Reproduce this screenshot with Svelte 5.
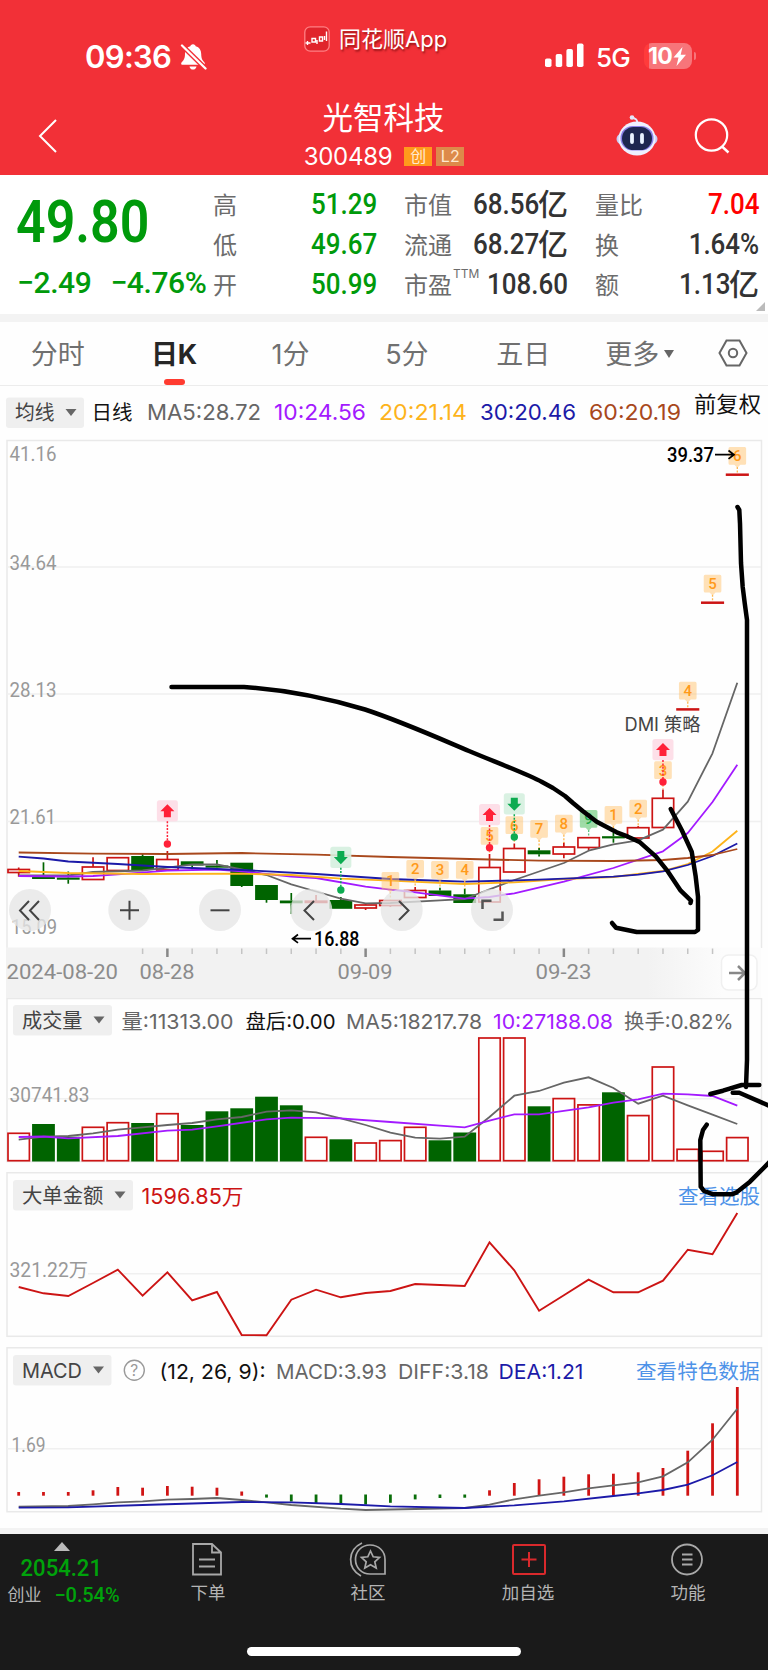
<script lang="ts">
  const STEP = 24.78
  const cx = (i: number) => 18.7 + i * STEP

  const quotes = [
    [{ k: '高', v: '51.29', c: 'down' }, { k: '市值', v: '68.56', u: '亿' }, { k: '量比', v: '7.04', c: 'hot' }],
    [{ k: '低', v: '49.67', c: 'down' }, { k: '流通', v: '68.27', u: '亿' }, { k: '换', v: '1.64%' }],
    [{ k: '开', v: '50.99', c: 'down' }, { k: '市盈', sup: 'TTM', v: '108.60' }, { k: '额', v: '1.13', u: '亿' }],
  ]

  const tabs = ['分时', '日K', '1分', '5分', '五日', '更多']
  let active = $state('日K')

  // [up, bodyTop, bodyBottom, high, low]
  const candles: [boolean, number, number, number, number][] = [
    [true, 869.5, 872.5, 867.5, 876.7],
    [false, 876.7, 879, 862.3, 879],
    [false, 877.5, 879.7, 871.5, 883.7],
    [true, 867, 879.5, 857.3, 879.5],
    [true, 857.7, 870.5, 857.7, 870.5],
    [false, 856, 870, 854, 870],
    [true, 859.5, 870, 851, 870],
    [false, 861.3, 865.5, 861.3, 869.5],
    [false, 865.5, 867.7, 860, 869],
    [false, 862.7, 886, 862.7, 887],
    [false, 885, 900, 885, 902.7],
    [false, 900.5, 903.3, 893, 914],
    [true, 901.2, 902.4, 895, 902],
    [false, 900, 908.8, 897, 908.8],
    [true, 905, 908, 903.5, 910],
    [true, 900.5, 905.5, 900.5, 907],
    [true, 890.5, 897.5, 887, 897.5],
    [false, 890.5, 896, 887.7, 896],
    [false, 894.3, 903, 888.5, 903],
    [true, 867.5, 902, 854, 902],
    [true, 848.5, 872, 843.5, 872],
    [false, 850.3, 854.3, 848, 856.5],
    [true, 847, 854, 842.5, 858.3],
    [true, 837.7, 847.5, 837.7, 850.5],
    [false, 836.2, 838.4, 832.7, 842.7],
    [true, 827.7, 838, 826, 838],
    [true, 798.3, 827.5, 789.5, 827.5],
    [true, 709, 709.8, 709, 709.8],
    [true, 602.3, 603.1, 602.3, 603.1],
    [true, 474.3, 475.1, 474.3, 475.1],
  ]

  type Series = [number, number][]
  const pts = (s: Series) => s.map(([i, y]) => `${cx(i).toFixed(1)},${y}`).join(' ')

  const mas: { color: string; data: Series }[] = [
    { color: '#666', data: [[0, 875.5], [2, 875.5], [3, 872], [5, 870.5], [6, 867.7], [7, 864.3], [8, 864.5], [9, 869.5], [10, 875], [11, 884.3], [12, 891.5], [13, 898.7], [14, 903.3], [15, 903], [17, 900.3], [18, 899], [19, 889.3], [20, 880], [22, 863], [23, 850.7], [24, 844.3], [25, 840.3], [26, 829.7], [27, 801.7], [28, 753.3], [29, 682.7]] },
    { color: '#a31aff', data: [[0, 876], [2, 876.5], [3, 876], [4, 874.3], [6, 870.7], [8, 869.5], [9, 871.3], [11, 876.5], [12, 878], [14, 886.7], [15, 889.7], [16, 892.3], [18, 898.7], [19, 897], [20, 893.3], [22, 881.7], [24, 868], [26, 851.3], [27, 833], [28, 802], [29, 764.7]] },
    { color: '#fdb31b', data: [[0, 871], [2, 873], [5, 874], [9, 873.7], [11, 875], [13, 878.7], [15, 880.7], [18, 884], [20, 882.3], [22, 879], [24, 877], [26, 871], [27, 864], [28, 851.5], [29, 830.7]] },
    { color: '#1c1aa8', data: [[0, 856.7], [1, 858.5], [2, 861.5], [4, 864], [6, 867], [9, 870], [12, 874], [15, 879], [18, 881.7], [21, 879.7], [24, 876.7], [25, 874.7], [26, 871.3], [27, 865], [28, 856], [29, 843.5]] },
    { color: '#a8481c', data: [[0, 852.5], [3, 853.7], [6, 854], [9, 853], [12, 854.7], [15, 857], [19, 859.5], [21, 860.7], [24, 861], [26, 860], [27, 858], [28, 855], [29, 849]] },
  ]

  // [index, top, digit, dotted line end]
  const tags: [number, number, string, number][] = [
    [15, 872, '1', 900], [16, 860, '2', 887], [17, 861, '3', 888], [18, 861, '4', 889],
    [19, 827, '5', 854], [20, 816.3, '6', 843], [21, 820, '7', 848], [22, 814.7, '8', 843],
    [23, 810, '9', 837], [24, 806, '1', 833], [25, 799.7, '2', 827], [26, 761.3, '3', 789],
    [27, 681.7, '4', 708], [28, 574.7, '5', 601], [29, 447, '6', 473],
  ]

  // [index, box top, dot centre, buy]
  const signals: [number, number, number, boolean][] = [
    [6, 800.3, 844, true], [13, 846.7, 890, false], [19, 804, 847.7, true], [20, 793.3, 837, false], [26, 739, 782, true],
  ]

  const volumes: [boolean, number][] = [
    [true, 1133.3], [false, 1124], [false, 1136.7], [true, 1127.3], [true, 1122.7], [false, 1123],
    [true, 1113.7], [false, 1125], [false, 1111.3], [false, 1108.3], [false, 1096.7], [false, 1105.3],
    [true, 1137.3], [false, 1139.3], [true, 1143], [true, 1140.6], [true, 1127.3], [false, 1140.3],
    [false, 1132.5], [true, 1038], [true, 1038], [false, 1106.3], [true, 1098.6], [true, 1104.9],
    [false, 1092.3], [true, 1115.6], [true, 1067], [true, 1149.3], [true, 1151.3], [true, 1137.6],
  ]
  const vol5: Series = [[0, 1139.7], [1, 1136.7], [2, 1136], [3, 1133.3], [4, 1129.7], [5, 1127.3], [6, 1125], [7, 1123], [8, 1119.3], [9, 1117], [10, 1111.7], [11, 1110.3], [12, 1112.3], [13, 1118.3], [14, 1125], [15, 1132.7], [16, 1137.7], [17, 1138.7], [18, 1136.7], [19, 1117], [20, 1095.7], [21, 1091], [22, 1082.7], [23, 1077.3], [24, 1088], [25, 1103.7], [26, 1095.7], [27, 1105.3], [28, 1114.7], [29, 1124]]
  const vol10: Series = [[0, 1137], [1, 1136.5], [2, 1138.3], [4, 1136], [6, 1130.7], [7, 1129.7], [8, 1126.3], [10, 1119.3], [11, 1117.7], [13, 1118.3], [15, 1122], [17, 1125.7], [18, 1127.3], [19, 1120.7], [20, 1114.3], [21, 1114.3], [23, 1107.3], [24, 1102.7], [25, 1099.3], [26, 1093.7], [27, 1094.3], [28, 1096], [29, 1105.7]]

  const bigOrders = [1287, 1293.3, 1296, 1283, 1269.7, 1295.7, 1272.3, 1300.3, 1292, 1335, 1335.3, 1299.7, 1289.7, 1297.3, 1293, 1291, 1284, 1285, 1286, 1242.3, 1270.3, 1310.7, 1295.3, 1279.7, 1292.3, 1292.3, 1280.7, 1249.7, 1254.3, 1213]

  const macd = [1492, 1492, 1492, 1490.3, 1487, 1487.7, 1486, 1486.7, 1487.7, 1491.5, 1497.6, 1501.5, 1503.5, 1504.5, 1504.5, 1502.8, 1499.4, 1498, 1497.7, 1490.3, 1483, 1479.3, 1476.7, 1474.3, 1473.7, 1472.3, 1468, 1450.7, 1423.3, 1387]
  const diff: Series = [[0, 1506.7], [2, 1506], [3, 1504.3], [4, 1502.3], [5, 1501.3], [6, 1499.7], [7, 1499], [8, 1498], [9, 1500], [10, 1502.3], [11, 1505], [13, 1508.7], [14, 1510], [16, 1509], [18, 1508], [19, 1504.7], [20, 1499.3], [21, 1495.7], [22, 1492.3], [23, 1488.3], [24, 1485.3], [25, 1482.3], [26, 1476.3], [27, 1462.3], [28, 1439.7], [29, 1408.7]]
  const dea: Series = [[0, 1507.7], [2, 1507.3], [5, 1505], [9, 1502], [11, 1502.3], [13, 1504], [15, 1506.3], [18, 1508], [20, 1505.3], [22, 1501.3], [24, 1496], [25, 1493.3], [26, 1490], [27, 1484.7], [28, 1475.3], [29, 1462]]
</script>

{#snippet txt(x: number, y: number, w: number, s: string, color: string, size: number, cls: string)}
  <text {x} {y} textLength={w} lengthAdjust="spacingAndGlyphs" fill={color} font-size={size} class={cls}>{s}</text>
{/snippet}

{#snippet chip(y: number, w: number, s: string, x: number = 13)}
  <rect {x} {y} width={w} height="30.5" rx="3" fill="#efefef" />
  {@render txt(x + 9, y + 22.7, w - 38.5, s, '#444', 20.5, 'ui')}
  <path d="M{x + w - 18.5} {y + 11.5}h11l-5.5 7z" fill="#666" />
{/snippet}

<div class="screen">
  <header>
    <div class="status">
      <div class="clock">
        <span>09:36</span>
        <svg width="27" height="28" viewBox="0 0 27 28">
          <path d="M13 1.2c1.6 0 2.4 1 2.7 2 3.8 1 5.4 4 5.5 7.8 0.1 5 1.5 6.6 3.3 8.4 0.7 1 0.3 2.4-1 2.4h-21c-1.3 0-1.7-1.4-1-2.4C3.5 17.5 4.9 16 5 11c0.1-3.8 1.7-6.8 5.3-7.8 0.3-1 1.1-2 2.7-2zM9.5 23.4h7c-0.3 2-1.7 3.2-3.5 3.2s-3.2-1.2-3.5-3.2z" fill="#fff" />
          <path d="M2 2.5l23.5 23" stroke="#f23037" stroke-width="5" />
          <path d="M2 2.5l23.5 23" stroke="#fff" stroke-width="2.3" stroke-linecap="round" />
        </svg>
      </div>
      <div class="app">
        <svg width="26" height="26" viewBox="0 0 26 26">
          <rect x=".8" y=".8" width="24.4" height="24.4" rx="5.5" fill="#e0242c" stroke="#ff8084" stroke-width="1.3" />
          <path d="M1.5 17h5M3.5 15v4M8 12.5h3.5v3.5H8zM13 14v4M15.5 11h3v4h-3zM20.5 10v4M22.5 5.5V15" stroke="#fff" stroke-width="1.4" fill="none" />
        </svg>
        <span>同花顺App</span>
      </div>
      <div class="net">
        <svg width="39" height="25" viewBox="0 0 39 25" fill="#fff">
          <rect x="0" y="15.5" width="6.5" height="8.5" rx="1.8" />
          <rect x="10.7" y="11" width="6.5" height="13" rx="1.8" />
          <rect x="21.4" y="6" width="6.5" height="18" rx="1.8" />
          <rect x="32" y=".5" width="6.5" height="23.5" rx="1.8" />
        </svg>
        <span class="g5">5G</span>
        <div class="battery">
          <span>10</span>
          <svg width="14" height="19" viewBox="0 0 14 19"><path d="M9.5 0L.5 10.5h5L3.5 19 13 7.8H7.7z" fill="#fff" /></svg>
        </div>
      </div>
    </div>
    <div class="title-bar">
      <svg class="back" width="20" height="36" viewBox="0 0 20 36"><path d="M18 2L2 18l16 16" fill="none" stroke="#fff" stroke-width="2" /></svg>
      <div class="stock">
        <h1>光智科技</h1>
        <div class="code">
          <span>300489</span><i class="cy">创</i><i class="l2">L2</i>
        </div>
      </div>
      <div class="tools">
        <svg width="42" height="41" viewBox="0 0 42 41">
          <path d="M21 8C22 4 19 4 16.5 2.5" stroke="#e4e6fb" stroke-width="2" fill="none" />
          <circle cx="16" cy="2.5" r="2.3" fill="#e4e6fb" />
          <ellipse cx="21" cy="24" rx="20.5" ry="9.5" fill="#c9cdf4" />
          <ellipse cx="21" cy="23.5" rx="18.5" ry="17" fill="#eef0ff" />
          <rect x="4.5" y="11" width="33" height="24.5" rx="12" fill="#8a82e8" />
          <rect x="6" y="12" width="30" height="23" rx="11.5" fill="#1d2750" />
          <path d="M16 20v7M26 20v7" stroke="#e9f3ff" stroke-width="3.8" stroke-linecap="round" />
        </svg>
        <svg class="find" width="36" height="38" viewBox="0 0 36 38"><circle cx="17.5" cy="18" r="15.7" fill="none" stroke="#fff" stroke-width="2.2" /><path d="M28 29.5l6.5 6" stroke="#fff" stroke-width="2.4" /></svg>
      </div>
    </div>
  </header>

  <section class="quote">
    <div class="price down">
      <div class="now"><span class="num">49.80</span></div>
      <div class="chg"><span>−2.49</span><span>−4.76%</span></div>
    </div>
    <div class="grid">
      {#each quotes as row}
        {#each row as q}
          <div class="cell">
            <span class="k">{q.k}{#if q.sup}<sup>{q.sup}</sup>{/if}</span>
            <span class="v {q.c ?? ''}"><span class="num">{q.v}</span>{#if q.u}<b>{q.u}</b>{/if}</span>
          </div>
        {/each}
      {/each}
    </div>
    <i class="corner"></i>
  </section>

  <nav class="tabs">
    {#each tabs as tab}
      <button class:active={active === tab} onclick={() => active = tab}>
        {tab}{#if tab === '更多'}<i class="caret"></i>{/if}
      </button>
    {/each}
    <div class="setting">
      <svg width="30" height="28" viewBox="0 0 30 28" fill="none" stroke="#666" stroke-width="2"><path d="M8.5 1.5h13L28.5 14l-7 12.5h-13L1.5 14z" /><circle cx="15" cy="14" r="4.2" /></svg>
    </div>
  </nav>

  <!-- Candlestick chart -->
  <svg class="pane" width="768" height="612" viewBox="0 386 768 612">
    {@render chip(397.5, 78, '均线', 6)}
    {@render txt(91.5, 419.5, 41, '日线', '#111', 20.5, 'ui')}
    {@render txt(147, 420, 114, 'MA5:28.72', '#666', 22, 'ui')}
    {@render txt(274, 420, 92, '10:24.56', '#a31aff', 22, 'ui')}
    {@render txt(379, 420, 88, '20:21.14', '#fdb31b', 22, 'ui')}
    {@render txt(480, 420, 96, '30:20.46', '#1c1aa8', 22, 'ui')}
    {@render txt(589, 420, 92, '60:20.19', '#a8481c', 22, 'ui')}
    {@render txt(694, 411.5, 67, '前复权', '#111', 21.5, 'ui')}

    <path d="M7 948V440.5H761.5V948" fill="none" stroke="#e9e9e9" stroke-width="1.5" />
    <path d="M7 567H761M7 694H761M7 821.5H761" stroke="#f0f0f0" stroke-width="1.5" />

    <defs>
      <linearGradient id="axis-bg" x1="0" y1="0" x2="1" y2="0">
        <stop offset="0" stop-color="#f2f2f2" />
        <stop offset=".85" stop-color="#f2f2f2" />
        <stop offset=".95" stop-color="#fcfcfc" />
      </linearGradient>
    </defs>
    <rect x="6" y="947.5" width="755" height="50.5" fill="url(#axis-bg)" />
    {#each Array(24) as _, n}
      {@const i = n + 5}
      {@const major = i % 8 === 6}
      <path d="M{cx(i)} 948.5v{major ? 8.5 : 5.5}" stroke={major ? '#888' : '#c4c4c4'} stroke-width={major ? 2.5 : 1.5} />
    {/each}
    {@render txt(6.5, 979.3, 111.5, '2024-08-20', '#8c8c8c', 19.5, 'din')}
    {@render txt(139.5, 979.3, 55, '08-28', '#8c8c8c', 19.5, 'din')}
    {@render txt(337.5, 979.3, 55, '09-09', '#8c8c8c', 19.5, 'din')}
    {@render txt(535.5, 979.3, 56, '09-23', '#8c8c8c', 19.5, 'din')}

    {@render txt(9.5, 460.5, 47, '41.16', '#999', 19.5, 'din')}
    {@render txt(9.5, 569.5, 47, '34.64', '#999', 19.5, 'din')}
    {@render txt(9.5, 696.5, 47, '28.13', '#999', 19.5, 'din')}
    {@render txt(9.5, 823.8, 46.5, '21.61', '#999', 19.5, 'din')}
    {@render txt(11, 934, 46, '15.09', '#999', 19.5, 'din')}

    {#each candles as [up, t, b, hi, lo], i}
      {@const c = up ? '#cc1414' : '#006400'}
      <g stroke={c} stroke-width="1.7">
        {#if hi < t}<path d="M{cx(i)} {hi}V{t}" />{/if}
        {#if lo > b}<path d="M{cx(i)} {b}V{lo}" />{/if}
        {#if up}
          <rect x={cx(i) - 10.7} y={t} width="21.4" height={b - t} fill="#fff" />
        {:else}
          <rect x={cx(i) - 11.4} y={t} width="22.8" height={b - t} fill={c} stroke="none" />
        {/if}
      </g>
    {/each}

    {#each mas as m}
      <polyline points={pts(m.data)} fill="none" stroke={m.color} stroke-width="1.8" stroke-linejoin="round" />
    {/each}

    <!-- Streak counters -->
    {#each tags as [i, top, n, end]}
      {@const green = n === '9'}
      <path d="M{cx(i)} {top + 20}V{end}" stroke={green ? '#5cc080' : '#ffb84d'} stroke-width="1.3" stroke-dasharray="2 1.5" />
      <path
        d="M{cx(i) - 7.3} {top}h14.6q1.5 0 1.5 1.5v14.7q0 1.5-1.5 1.5h-4.3l-3 3-3-3h-4.3q-1.5 0-1.5-1.5v-14.7q0-1.5 1.5-1.5z"
        fill={green ? '#7fd08a' : '#ffc470'}
        fill-opacity={green ? .75 : .5}
      />
      <text x={cx(i)} y={top + 14.3} text-anchor="middle" font-size="15" fill={green ? '#1fa84a' : '#ff9a1a'} class="din mid">{n}</text>
    {/each}

    <!-- Buy / sell signals -->
    {#each signals as [i, top, dot, buy]}
      {@const c = buy ? '#ff2138' : '#0cab50'}
      <rect x={cx(i) - 10.5} y={top} width="21" height="21.3" rx="2.5" fill={buy ? '#fddbe6' : '#d5f0df'} opacity=".9" />
      <path transform="translate({cx(i)} {top + 10.7}){buy ? '' : ' scale(1 -1)'}" d="M0-6.8L7 .3H3.5V6.3H-3.5V.3H-7z" fill={c} />
      <path d="M{cx(i)} {top + 21}V{dot}" stroke={c} stroke-width="1.5" stroke-dasharray="2 1.4" />
      <circle cx={cx(i)} cy={dot} r="3.7" fill={c} />
    {/each}
    {@render txt(624.5, 731, 76, 'DMI 策略', '#444', 18.5, 'ui')}

    {@render txt(667, 462, 47, '39.37', '#000', 19.5, 'din mid')}
    <path d="M715 454.7h19M728.5 450.5l5.5 4.2-5.5 4.2" fill="none" stroke="#000" stroke-width="1.7" />
    {@render txt(314, 946, 45.5, '16.88', '#000', 19.5, 'din mid')}
    <path d="M311 938.7H292M298 934.5l-5.5 4.2 5.5 4.2" fill="none" stroke="#000" stroke-width="1.7" />

    <!-- Round controls -->
    <g fill="#e6e6e6" fill-opacity=".78">
      {#each [30, 129.3, 220, 311.3, 401.7, 492] as x}
        <circle cx={x} cy="910" r="21" />
      {/each}
    </g>
    <g fill="none" stroke="#444" stroke-width="2">
      <path d="M29 901l-9 9.5 9 9.5M39 901l-9 9.5 9 9.5" />
      <path d="M120 910.3h19M129.5 900.8v19" />
      <path d="M210.5 910.3h19" />
      <path d="M314 901l-9.5 9.5 9.5 9.5" />
      <path d="M399 901l9.5 9.5-9.5 9.5" />
    </g>
    <path d="M482.5 909v-8.3h9M493.5 919.7h9v-8.3" fill="none" stroke="#555" stroke-width="2.5" />

    <rect x="721.5" y="955" width="35.5" height="35" rx="7" fill="#fff" stroke="#f0f0f0" stroke-width="1.5" />
    <path d="M729 973h15M738 966l7 7-7 7" fill="none" stroke="#888" stroke-width="2.5" />
  </svg>

  <!-- Volume -->
  <svg class="pane" width="768" height="174" viewBox="0 998 768 174">
    <path d="M7 1161.5V998.5H761.5V1161.5z" fill="none" stroke="#e9e9e9" stroke-width="1.5" />
    <path d="M7 1098.7H761" stroke="#f0f0f0" stroke-width="1.5" />
    {@render chip(1005, 99, '成交量')}
    {@render txt(121.5, 1028.5, 112, '量:11313.00', '#666', 20.5, 'ui')}
    {@render txt(245.5, 1028.5, 90, '盘后:0.00', '#111', 20.5, 'ui')}
    {@render txt(346, 1028.5, 136, 'MA5:18217.78', '#666', 20.5, 'ui')}
    {@render txt(493, 1028.5, 120, '10:27188.08', '#a31aff', 20.5, 'ui')}
    {@render txt(624, 1028.5, 109.5, '换手:0.82%', '#666', 20.5, 'ui')}
    {@render txt(9.5, 1101.5, 80, '30741.83', '#999', 19.5, 'din')}
    {#each volumes as [up, top], i}
      {#if up}
        <rect x={cx(i) - 10.7} y={top} width="21.4" height={1160.7 - top} fill="#fff" stroke="#cc1414" stroke-width="1.7" />
      {:else}
        <rect x={cx(i) - 11.4} y={top} width="22.8" height={1161.5 - top} fill="#006400" />
      {/if}
    {/each}
    <polyline points={pts(vol5)} fill="none" stroke="#666" stroke-width="1.8" />
    <polyline points={pts(vol10)} fill="none" stroke="#a31aff" stroke-width="1.8" />
  </svg>

  <!-- Large orders -->
  <svg class="pane" width="768" height="175" viewBox="0 1172 768 175">
    <rect x="7" y="1172.7" width="754.5" height="163.6" fill="none" stroke="#e9e9e9" stroke-width="1.5" />
    <path d="M88 1273.7H761" stroke="#f0f0f0" stroke-width="1.5" />
    {@render chip(1180, 120, '大单金额')}
    {@render txt(141.5, 1203.5, 102, '1596.85万', '#cc1414', 21, 'ui')}
    {@render txt(678, 1203.5, 82, '查看选股', '#4f93e8', 20.5, 'ui')}
    {@render txt(9.5, 1276.5, 78.5, '321.22万', '#999', 19.5, 'din')}
    <polyline points={pts(bigOrders.map((y, i) => [i, y]))} fill="none" stroke="#cc1414" stroke-width="1.9" />
  </svg>

  <!-- MACD -->
  <svg class="pane" width="768" height="181" viewBox="0 1347 768 181">
    <rect x="7" y="1347.8" width="754.5" height="163.9" fill="none" stroke="#e9e9e9" stroke-width="1.5" />
    <path d="M7 1448.8H761" stroke="#f0f0f0" stroke-width="1.5" />
    {@render chip(1355, 98.5, 'MACD')}
    <circle cx="134.3" cy="1370.3" r="10" fill="none" stroke="#999" stroke-width="1.4" />
    <text x="134.3" y="1375.8" text-anchor="middle" font-size="15.5" fill="#999" class="ui">?</text>
    {@render txt(159.5, 1378.5, 106, '(12, 26, 9):', '#111', 20.5, 'ui')}
    {@render txt(276, 1378.5, 111, 'MACD:3.93', '#666', 20.5, 'ui')}
    {@render txt(398, 1378.5, 91, 'DIFF:3.18', '#666', 20.5, 'ui')}
    {@render txt(498.5, 1378.5, 85, 'DEA:1.21', '#1c1aa8', 20.5, 'ui')}
    {@render txt(636, 1378.5, 123.5, '查看特色数据', '#4f93e8', 20.5, 'ui')}
    {@render txt(11.5, 1452, 34, '1.69', '#999', 19.5, 'din')}
    {#each macd as y, i}
      {@const up = y < 1495}
      <path d="M{cx(i)} {up ? 1495.7 : 1494.5}V{y}" stroke={up ? '#d01414' : '#0a6e0a'} stroke-width="2.8" />
    {/each}
    <polyline points={pts(diff)} fill="none" stroke="#666" stroke-width="1.8" />
    <polyline points={pts(dea)} fill="none" stroke="#1c1aa8" stroke-width="1.8" />
  </svg>

  <footer>
    <div class="bar">
      <div class="index">
        <i class="up"></i>
        <div class="pt"><span class="num">2054.21</span></div>
        <div class="row"><span>创业</span><span class="pct">−0.54%</span></div>
      </div>
      <div class="item">
        <svg width="36" height="36" viewBox="0 0 36 36" fill="none" stroke="#a8a8a8" stroke-width="1.8"><path d="M3 3h19l9 8.5V33.5H3zM22 3v8.5h9M9 18.5h16M9 25.5h16" /></svg>
        <span>下单</span>
      </div>
      <div class="item">
        <svg width="38" height="36" viewBox="0 0 38 36" fill="none" stroke="#a8a8a8" stroke-width="1.7"><path d="M21 4c9 0 15 6.5 15 14.5V33H21C12.5 33 6.5 26.5 6.5 18.5S12.5 4 21 4zM13 2C-2 9-2 27.5 12 35" /><path d="M21.5 10l2.7 5.8 6.3.7-4.7 4.3 1.4 6.2-5.7-3.2-5.7 3.2 1.4-6.2-4.7-4.3 6.3-.7z" /></svg>
        <span>社区</span>
      </div>
      <div class="item">
        <svg width="36" height="36" viewBox="0 0 36 36" fill="none" stroke="#d9292c" stroke-width="2"><rect x="3" y="4" width="32" height="29" rx="1" /><path d="M11.5 18.5h15M19 11v15" /></svg>
        <span>加自选</span>
      </div>
      <div class="item">
        <svg width="36" height="36" viewBox="0 0 36 36" fill="none" stroke="#a8a8a8" stroke-width="1.8"><circle cx="17" cy="18.5" r="15" /><path d="M12 13.5h10.5M12 18.5h10.5M12 23.5h10.5" /></svg>
        <span>功能</span>
      </div>
    </div>
    <div class="home"></div>
  </footer>

  <!-- Freehand notes -->
  <svg class="ink" width="768" height="1670" viewBox="0 0 768 1670" fill="none" stroke="#000" stroke-width="4.5" stroke-linecap="round" stroke-linejoin="round">
    <path d="M171.5 687H244C290 690 330 699 365 709.5C400 721 436 737 469 751C495 762 525 773 542 782L553 788L565 796L573 803L582.7 811L596.7 821.7L616.7 832.3L628 836.7L640 842.3L656 856.7L668 871.7L680.7 890.7L691 900.7L690.5 903" />
    <path d="M670.7 809L681.7 830L691.7 851.7L695.7 876.7L698 896.7V930L695 932H636.7L616 927.7L612 923" />
    <path d="M737.5 507L739.3 510L740 523.3L741 563L742.7 587L744.7 603L747 620V1060L746 1087" />
    <path d="M710.3 1094L723 1090.7L741.7 1085H759.3" />
    <path d="M732.7 1092.7H739.3L772 1107M772 1159.5L750 1181.7L736.7 1192.3L731.7 1194.3H713.3L704 1191L700.7 1186.7L700.3 1140L703 1130L706.7 1124.7" />
  </svg>
</div>

<style>
  :global(body) {
    margin: 0;
    background: #fff;
  }

  .screen {
    position: relative;
    width: 768px;
    height: 1670px;
    overflow: hidden;
    background: #fefefe;
    font-family: Inter, "Noto Sans CJK SC", sans-serif;
    color: #333;
  }

  i { font-style: normal; }
  .ui { font-family: Inter, "Noto Sans CJK SC", sans-serif; }
  .din { font-family: Roboto, "Noto Sans CJK SC", sans-serif; }
  .mid { font-weight: 500; }

  .num {
    display: inline-block;
    font-family: Roboto, sans-serif;
    font-weight: 500;
    transform: scaleX(0.88);
    transform-origin: right center;
  }

  .pane { display: block; }

  /* ── Header ── */
  header {
    height: 175px;
    background: #f23037;
    color: #fff;
  }

  .status {
    display: grid;
    grid-template-columns: 304px 1fr 147px;
    height: 92px;
    padding-right: 76px;
  }

  .clock {
    display: flex;
    gap: 9px;
    padding: 38px 0 0 85px;
    font-size: 31px;
    font-weight: 600;
    line-height: 38px;
    letter-spacing: -0.7px;
  }
  .clock svg { margin-top: 5px; }

  .app {
    display: flex;
    gap: 9px;
    padding-top: 26px;
    font-size: 22px;
    line-height: 27px;
    text-shadow: 1px 2px 2px rgba(90, 0, 0, 0.6);
  }

  .net {
    display: flex;
    align-items: flex-start;
    padding-top: 43px;
  }

  .g5 {
    margin: -1px 0 0 12px;
    font-size: 26px;
    font-weight: 500;
    line-height: 31px;
    letter-spacing: -0.8px;
  }

  .battery {
    position: relative;
    display: flex;
    align-items: center;
    gap: 1px;
    box-sizing: border-box;
    width: 48px;
    height: 26px;
    margin-left: 14px;
    padding-left: 4px;
    border-radius: 8px;
    background: linear-gradient(90deg, #ff3b3b 5px, #f7757a 5px);
    font-size: 23px;
    font-weight: 700;
    letter-spacing: -0.5px;
  }
  .battery::after {
    content: '';
    position: absolute;
    left: 50px;
    top: 9px;
    width: 2px;
    height: 8px;
    border-radius: 0 2px 2px 0;
    background: #f7757a;
  }

  .title-bar {
    display: grid;
    grid-template-columns: 1fr auto 1fr;
  }

  .back { margin: 26px 0 0 38px; }

  .stock { text-align: center; }

  h1 {
    margin: 5px 1px 0 0;
    font-size: 30.5px;
    font-weight: 400;
    line-height: 42px;
  }

  .code {
    display: flex;
    align-items: center;
    justify-content: center;
    margin-top: 3px;
    font-size: 24px;
    line-height: 30px;
    letter-spacing: -0.3px;
  }
  .code i {
    width: 28px;
    height: 19px;
    margin: -1px 0 0 4px;
    font-size: 16px;
    line-height: 19px;
    letter-spacing: 0;
    color: #ffe9cf;
  }
  .code .cy { margin-left: 12px; background: #ff9a1c; }
  .code .l2 { background: #dd8a4a; }

  .tools {
    display: flex;
    justify-content: flex-end;
    gap: 36px;
    padding: 23px 38px 0 0;
  }
  .find { margin-top: 2px; }

  /* ── Quote ── */
  .quote {
    position: relative;
    display: flex;
    height: 139px;
    border-bottom: 8px solid #f3f3f3;
    background: #fff;
  }

  .down { color: #009a0b; }
  .hot { color: #ff0000; }

  .price { width: 213px; }
  .price .num { transform-origin: left center; }

  .now {
    height: 88px;
    padding: 10px 0 0 16px;
    box-sizing: border-box;
    font-size: 59px;
    line-height: 72px;
  }
  .now .num { font-weight: 600; }

  .chg {
    display: flex;
    gap: 19px;
    padding-left: 17px;
    font-family: Roboto, sans-serif;
    font-size: 30px;
    font-weight: 500;
    line-height: 40px;
    letter-spacing: -0.4px;
    white-space: nowrap;
  }

  .grid {
    display: grid;
    grid-template-columns: repeat(3, 164px);
    grid-template-rows: repeat(3, 40px);
    column-gap: 27px;
    padding-top: 9px;
  }

  .cell {
    display: flex;
    align-items: center;
    justify-content: space-between;
    white-space: nowrap;
  }

  .k {
    position: relative;
    margin-top: -2px;
    font-size: 24px;
    color: #6c6c6c;
  }

  sup {
    position: absolute;
    left: 49px;
    top: 0;
    font-size: 12px;
    line-height: 16px;
    vertical-align: baseline;
  }

  .v {
    display: flex;
    align-items: center;
    font-size: 29.5px;
  }
  .v b {
    margin-left: -1px;
    font-size: 30px;
    font-weight: 500;
    line-height: 36px;
  }

  .corner {
    position: absolute;
    right: 3px;
    bottom: 3px;
    border-left: 9px solid transparent;
    border-bottom: 9px solid #bbb;
  }

  /* ── Tabs ── */
  .tabs {
    display: grid;
    grid-template-columns: repeat(6, 116.4px) 1fr;
    box-sizing: border-box;
    height: 64px;
    border-bottom: 1.5px solid #ececec;
  }

  button {
    position: relative;
    padding: 0 1px 3px 0;
    border: 0;
    background: none;
    font: 400 27px Inter, "Noto Sans CJK SC", sans-serif;
    color: #707070;
  }
  button.active {
    font-weight: 700;
    color: #262626;
  }
  button.active::after {
    content: '';
    position: absolute;
    left: 48px;
    bottom: 0;
    width: 21px;
    height: 6px;
    border-radius: 3px;
    background: #ff3b30;
  }

  .caret {
    display: inline-block;
    margin-left: 5px;
    vertical-align: 6px;
    border: 5.5px solid transparent;
    border-top: 8px solid #666;
    border-bottom: 0;
  }

  .setting {
    display: flex;
    align-items: center;
    justify-content: center;
    padding-bottom: 2px;
  }

  /* ── Footer ── */
  footer {
    height: 136px;
    border-top: 6px solid #f3f3f3;
    background: #1a1a1a;
  }

  .bar {
    display: grid;
    grid-template-columns: 128px repeat(4, 160px);
    height: 113px;
    color: #b4b4b4;
  }

  .index {
    display: flex;
    flex-direction: column;
    align-items: center;
    padding-right: 5px;
    padding-top: 8px;
  }
  .index .num { color: #00a30b; transform: scaleX(0.92); transform-origin: center; }

  .up {
    border: 8px solid transparent;
    border-top: 0;
    border-bottom: 9px solid #bbb;
  }

  .pt {
    margin-top: 3px;
    font-size: 24px;
    line-height: 28px;
  }

  .row {
    display: flex;
    align-items: center;
    gap: 13px;
    margin-left: 4px;
    font-size: 17px;
    line-height: 27px;
    white-space: nowrap;
  }
  .pct {
    font: 500 20px/27px Roboto, sans-serif;
    letter-spacing: -0.1px;
    color: #00a30b;
  }

  .item {
    display: flex;
    flex-direction: column;
    align-items: center;
    padding-top: 7px;
    font-size: 17.5px;
    line-height: 26px;
  }
  .item span { margin-top: 3px; }

  .home {
    width: 274px;
    height: 9px;
    margin: 0 auto;
    border-radius: 5px;
    background: #fff;
  }

  .ink {
    position: absolute;
    left: 0;
    top: 0;
    pointer-events: none;
  }
</style>
